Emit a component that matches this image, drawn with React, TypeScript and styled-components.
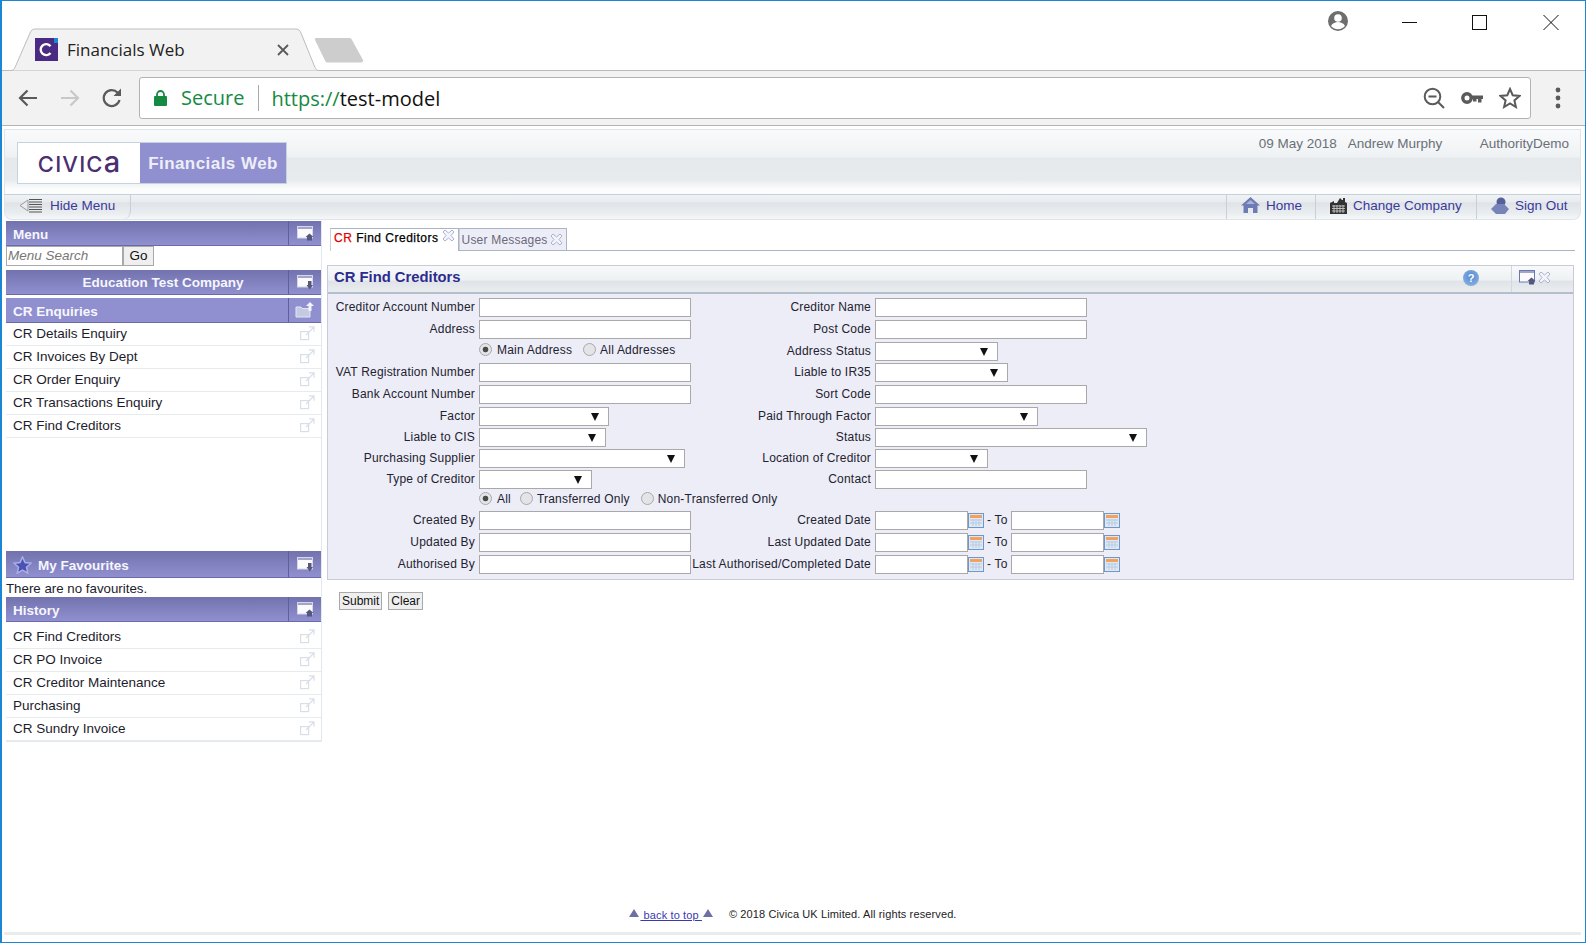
import { ReactElement, ReactNode } from 'react';
import styled, { createGlobalStyle } from 'styled-components';

const GlobalStyle = createGlobalStyle`
    html, body {
        margin: 0;
        padding: 0;
        background: #fff;
    }
    body {
        font-family: "Liberation Sans", Arial, sans-serif;
    }
`;

const Frame = styled.div`
    box-sizing: border-box;
    width: 1586px;
    height: 943px;
    border: 1px solid #1b86d3;
    border-width: 1px 1px 1px 2px;
    display: flex;
    flex-direction: column;
    overflow: hidden;
    background: #fff;
`;

/* ---- browser chrome ---- */

const TabStrip = styled.div`
    height: 69px;
    flex: none;
    display: flex;
    align-items: flex-end;
    border-bottom: 1px solid #b9b9b9;
    position: relative;
`;

const BrowserTab = styled.div`
    position: relative;
    width: 312px;
    height: 43px;
    margin-left: 5px;
    margin-bottom: -1px;
    display: flex;
    align-items: center;
    padding: 0 30px 0 28px;
    box-sizing: border-box;
    gap: 9px;

    > * {
        position: relative;
    }
    > svg.shape {
        position: absolute;
        left: 0;
        top: 0;
    }
`;

const TabTitle = styled.span`
    flex: 1;
    font-family: "Open Sans", sans-serif;
    font-size: 17px;
    color: #222;
    white-space: nowrap;
`;

const NewTab = styled.svg`
    margin-left: -5px;
    margin-bottom: 7px;
`;

const WindowControls = styled.div`
    margin-left: auto;
    align-self: flex-start;
    display: flex;
    align-items: flex-start;
    padding-top: 9px;
    padding-right: 26px;
`;

const Toolbar = styled.div`
    height: 55px;
    flex: none;
    box-sizing: border-box;
    background: #f2f2f2;
    border-bottom: 1px solid #b4b4b4;
    display: flex;
    align-items: center;
    padding: 0 10px 0 15px;
`;

const NavIcons = styled.div`
    display: flex;
    align-items: center;
    gap: 20px;
    width: 122px;
    flex: none;
`;

const UrlBox = styled.div`
    flex: 1;
    height: 42px;
    box-sizing: border-box;
    background: #fff;
    border: 1px solid #b3b3b3;
    border-radius: 3px;
    display: flex;
    align-items: center;
    padding: 0 9px 0 14px;
    font-family: "Open Sans", sans-serif;
    font-size: 20px;
`;

const SecureText = styled.span`
    color: #168a42;
    margin-left: 14px;
    padding-right: 14px;
    border-right: 1px solid #a8a8a8;
    line-height: 26px;
`;

const UrlText = styled.span`
    margin-left: 12px;
    color: #111;
    flex: 1;

    em {
        font-style: normal;
        color: #168a42;
    }
`;

const UrlIcons = styled.div`
    display: flex;
    align-items: center;
    gap: 16px;
`;

const MenuDots = styled.div`
    width: 44px;
    flex: none;
    display: flex;
    justify-content: flex-end;
    padding-right: 14px;
    box-sizing: border-box;
`;

/* ---- application ---- */

const AppShell = styled.div`
    flex: 1;
    display: flex;
    flex-direction: column;
    margin: 3px 4px 0 2px;
    min-height: 0;
`;

const AppHeader = styled.header`
    height: 66px;
    flex: none;
    box-sizing: border-box;
    border: 1px solid #dfe4e9;
    border-bottom: 1px solid #c6d0da;
    background: linear-gradient(#f9fafb 0, #eff2f4 42%, #e6e9ec 44%, #e8ebee 78%, #fbfcfc 92%, #fbfcfc 100%);
    display: flex;
    justify-content: space-between;
    padding: 5px 11px 0 12px;
`;

const LogoBox = styled.div`
    height: 42px;
    width: 270px;
    margin-top: 7px;
    box-sizing: border-box;
    border: 1px solid #c6d2de;
    display: flex;
    background: #fff;
`;

const CivicaLogo = styled.div`
    width: 122px;
    flex: none;
    color: #4b2f70;
    font-family: Inter, sans-serif;
    font-size: 22px;
    font-weight: 500;
    letter-spacing: 1.2px;
    text-align: center;
    line-height: 38px;
    box-sizing: border-box;

    span {
        font-size: 29px;
        letter-spacing: 0;
    }
`;

const ProductName = styled.div`
    flex: 1;
    background: #9090d0;
    color: #eeeef8;
    font-size: 17px;
    font-weight: bold;
    letter-spacing: 0.45px;
    text-align: center;
    line-height: 42px;
`;

const UserInfo = styled.div`
    display: flex;
    font-size: 13.5px;
    color: #6a7078;
    line-height: 18px;
`;

const UserName = styled.span`
    margin-left: 11px;
    width: 132px;
`;

const NavBar = styled.nav`
    height: 25px;
    flex: none;
    box-sizing: border-box;
    border: 1px solid #dfe4e9;
    border-top: 0;
    border-radius: 0 0 8px 8px;
    background: linear-gradient(#f0f3f5 0, #e9ecef 30%, #dfe3e7 32%, #eaedf0 75%, #f5f7f8 100%);
    display: flex;
    justify-content: space-between;
    font-size: 13.5px;
    color: #3a3a9c;
`;

const HideMenu = styled.div`
    width: 126px;
    box-sizing: border-box;
    border-right: 1px solid #c6d0da;
    border-radius: 0 0 8px 8px;
    display: flex;
    align-items: center;
    padding: 0 0 4px 14px;
    gap: 7px;
`;

const NavLinks = styled.div`
    display: flex;
`;

const NavLink = styled.a<{ $width: number }>`
    width: ${p => p.$width}px;
    box-sizing: border-box;
    border-left: 1px solid #c6d0da;
    display: flex;
    align-items: center;
    gap: 6px;
    padding: 0 0 4px 14px;
    color: inherit;
`;

const Columns = styled.div`
    flex: 1;
    display: flex;
    min-height: 0;
`;

const Sidebar = styled.aside`
    width: 316px;
    flex: none;
    padding-top: 1px;
    margin-left: 2px;
    box-sizing: content-box;
    height: 521px;
`;

const SidebarInner = styled.div`
    border-right: 1px solid #e3e8ee;
    border-bottom: 1px solid #e3e8ee;
    height: 521px;
    box-sizing: border-box;
    display: flex;
    flex-direction: column;
`;

const PanelHead = styled.div<{ $flat?: boolean; $height?: number }>`
    height: ${p => p.$height ?? 25}px;
    flex: none;
    box-sizing: border-box;
    display: flex;
    align-items: center;
    color: #f6f6fc;
    font-size: 13.5px;
    font-weight: bold;
    border-bottom: 1px solid #6a6aa8;
    background: ${p => (p.$flat ? '#9090d0' : 'linear-gradient(#7272ae, #9090d0)')};
`;

const HeadText = styled.span<{ $center?: boolean }>`
    flex: 1;
    padding-left: ${p => (p.$center ? 32 : 7)}px;
    padding-top: ${p => (p.$center ? 0 : 2)}px;
    display: flex;
    align-items: center;
    gap: 6px;
    justify-content: ${p => (p.$center ? 'center' : 'flex-start')};
`;

const HeadTool = styled.span`
    width: 33px;
    align-self: stretch;
    flex: none;
    box-sizing: border-box;
    border-left: 1px solid #5f5fa0;
    display: flex;
    align-items: center;
    justify-content: center;
`;

const SearchRow = styled.div`
    height: 20px;
    flex: none;
    display: flex;
    margin-bottom: 4px;
`;

const SearchInput = styled.input`
    width: 117px;
    height: 20px;
    box-sizing: border-box;
    border: 1px solid #a9a9a9;
    padding: 0 1px 2px;
    font-family: inherit;
    font-size: 13.5px;
    font-style: italic;

    &::placeholder {
        color: #777;
        opacity: 1;
    }
`;

const GoButton = styled.button`
    width: 31px;
    height: 20px;
    box-sizing: border-box;
    border: 1px solid #a9a9a9;
    background: #efefef;
    padding: 0 0 2px;
    font-family: inherit;
    font-size: 13.5px;
    color: #111;
`;

const MenuList = styled.ul<{ $top?: number }>`
    list-style: none;
    margin: ${p => p.$top ?? 0}px 0 0;
    padding: 0;
`;

const MenuItem = styled.li`
    height: 23px;
    box-sizing: border-box;
    border-bottom: 1px solid #e6ebf0;
    display: flex;
    align-items: center;
    justify-content: space-between;
    padding: 0 6px 1px 7px;
    font-size: 13.5px;
    color: #1c1c2c;
`;

const Gap = styled.div<{ $height: number }>`
    height: ${p => p.$height}px;
    flex: none;
`;

const NoFavourites = styled.div`
    height: 19px;
    flex: none;
    font-size: 13.3px;
    line-height: 22px;
    color: #1c1c2c;
`;

const Main = styled.main`
    flex: 1;
    min-width: 0;
    padding: 8px 6px 0 5px;
`;

const Tabs = styled.div`
    height: 22px;
    margin-left: 3px;
    border-bottom: 1px solid #a9b5c5;
    display: flex;
    align-items: flex-end;
    box-sizing: content-box;
`;

const PageTab = styled.div<{ $active?: boolean }>`
    box-sizing: border-box;
    height: ${p => (p.$active ? 23 : 22)}px;
    display: flex;
    align-items: ${p => (p.$active ? 'flex-start' : 'center')};
    gap: ${p => (p.$active ? 3 : 2)}px;
    padding: ${p => (p.$active ? '0 3px' : '0 3px 0 2px')};
    font-size: 12px;
    letter-spacing: ${p => (p.$active ? 0.5 : 0.2)}px;
    -webkit-text-stroke: ${p => (p.$active ? '0.25px' : '0')};
    color: ${p => (p.$active ? '#000' : '#6a6a78')};
    background: ${p => (p.$active ? '#fff' : '#ededf7')};
    border: 1px solid #a9b5c5;
    border-bottom: 0;
    border-left-color: #c8d0da;
    margin-bottom: ${p => (p.$active ? '-1px' : '0')};
    line-height: ${p => (p.$active ? 18 : 16)}px;

    b {
        font-weight: normal;
        color: #e00000;
    }
`;

const FormPanel = styled.section`
    margin-top: 14px;
    margin-right: 1px;
    box-sizing: border-box;
    border: 1px solid #c8ccd8;
    background: #ededf7;
    height: 315px;
`;

const FormHead = styled.div`
    height: 28px;
    box-sizing: border-box;
    border-bottom: 2px solid #b4bfcc;
    background: linear-gradient(#f7f9fa 0, #eef1f3 55%, #dfe3e7 57%, #eaedf0 100%);
    display: flex;
    align-items: flex-start;
    color: #2c2c8e;
    font-size: 14.8px;
    font-weight: bold;
    padding-left: 6px;
    line-height: 19px;
`;

const FormTitle = styled.span`
    flex: 1;
    padding-top: 2px;
`;

const HelpBadge = styled.span`
    width: 16px;
    height: 16px;
    margin: 4px 32px 0 0;
    border-radius: 50%;
    background: radial-gradient(circle at 50% 40%, #4f8ad6, #9ab9de);
    color: #fff;
    font-size: 11px;
    line-height: 16px;
    text-align: center;
`;

const FormTools = styled.span`
    width: 62px;
    align-self: stretch;
    flex: none;
    box-sizing: border-box;
    border-left: 1px solid #d2d8df;
    display: flex;
    align-items: center;
    padding: 0 0 3px 7px;
    gap: 2px;
`;

const FormBody = styled.div`
    padding-top: 4px;
`;

const FormRow = styled.div<{ $height?: number }>`
    height: ${p => p.$height ?? 22}px;
    display: grid;
    grid-template-columns: 151px 213px 183px 1fr;
    align-items: start;
`;

const Label = styled.label`
    text-align: right;
    padding-right: 4px;
    font-size: 12px;
    letter-spacing: 0.2px;
    line-height: 19px;
    white-space: nowrap;
    color: #222230;
`;

const TextField = styled.input<{ $width?: number }>`
    display: block;
    width: ${p => p.$width ?? 212}px;
    height: 19px;
    box-sizing: border-box;
    border: 1px solid #a9a9a9;
    background: #fff;
    padding: 0 2px;
    font-family: inherit;
    font-size: 12px;
`;

const SelectWrap = styled.div<{ $width: number }>`
    position: relative;
    width: ${p => p.$width}px;
    height: 19px;

    &::after {
        content: '';
        position: absolute;
        right: 10px;
        top: 6px;
        border-style: solid;
        border-width: 8px 4px 0;
        border-color: #111 transparent transparent;
        pointer-events: none;
    }
`;

const SelectField = styled.select`
    display: block;
    width: 100%;
    height: 19px;
    appearance: none;
    border: 1px solid #a9a9a9;
    border-radius: 0;
    background: #fff;
    font-family: inherit;
    font-size: 12px;
`;

const RadioGroup = styled.div`
    display: flex;
    align-items: center;
    grid-column: 2 / 3;
    height: 15px;
    white-space: nowrap;
`;

const RadioLabel = styled.label<{ $gap: number }>`
    display: flex;
    align-items: center;
    gap: 4px;
    margin-right: ${p => p.$gap}px;
    font-size: 12px;
    letter-spacing: 0.2px;
    color: #222230;

    &:first-child {
        gap: 5px;
    }
`;

const Radio = styled.input`
    appearance: none;
    width: 13px;
    height: 13px;
    margin: 0;
    border-radius: 50%;
    border: 1px solid #a8a8a8;
    background: #e4e4e8;

    &:checked {
        background: radial-gradient(circle, #4a4a4a 0, #4a4a4a 2.5px, #e4e4e8 3.2px);
    }
`;

const DateRange = styled.div`
    display: flex;
    align-items: flex-start;
`;

const DateTo = styled.span`
    width: 27px;
    padding-left: 3px;
    box-sizing: border-box;
    font-size: 12px;
    letter-spacing: 0.2px;
    line-height: 19px;
    color: #222230;
`;

const CalendarIcon = styled.svg`
    display: block;
    margin-top: 2px;
    flex: none;
`;

const ButtonRow = styled.div`
    display: flex;
    gap: 6px;
    margin: 12px 0 0 12px;
`;

const ActionButton = styled.button`
    height: 18px;
    box-sizing: border-box;
    padding: 0 2px;
    border: 1px solid #a9a9a9;
    background: #efefef;
    font-family: inherit;
    font-size: 12px;
    color: #111;
`;

const Footer = styled.footer`
    flex: none;
    height: 24px;
    display: flex;
    justify-content: center;
    align-items: flex-start;
    font-size: 11px;
    letter-spacing: 0.12px;
    color: #222;
`;

const BackToTop = styled.a`
    display: flex;
    align-items: flex-start;
    color: #3a3ab0;
    text-decoration: underline;
    margin-right: 15px;
    white-space: pre;
    line-height: 14px;
`;

const BottomRule = styled.div`
    height: 3px;
    flex: none;
    background: #e8ecef;
    margin-bottom: 7px;
`;

/* ---- drawings ---- */

const WindowIcon = ({ arrow, outline }: { arrow?: 'up' | 'down'; outline?: string }): ReactElement => (
    <svg width="17" height="15" viewBox="0 0 17 15">
        <rect x="0.5" y="0.5" width="15" height="11.500" fill="#fbfbfe" stroke={outline ?? '#d4d6ea'} />
        <rect x="1" y="1" width="14" height="2" fill="#a4a4c8" />
        {arrow === 'down' ? (
            <path d="M11 6h3.500v4H16l-3.200 4.500L9.500 10H11z" fill="#55587a" />
        ) : (
            <path d="M12.500 7.500L16.500 11H15v3.500h-5V11H8.500z" fill="#55587a" />
        )}
    </svg>
);

const FolderUpIcon = (): ReactElement => (
    <svg width="20" height="16" viewBox="0 0 20 16">
        <path d="M1 5h5l1 1.500h8V15H1z" fill="#c4cae2" stroke="#e2e6f2" />
        <path d="M15 0l4 4h-2.500v5h-3V4H11z" fill="#f2f4fa" />
    </svg>
);

const StarIcon = (): ReactElement => (
    <svg width="19" height="18" viewBox="0 0 19 18">
        <path d="M9.500 1l2.500 5.600 6 .6-4.500 4 1.300 6-5.300-3.100-5.300 3.100 1.300-6-4.500-4 6-.6z" fill="#4a52b8" stroke="#a8b0e4" strokeWidth="1.500" />
    </svg>
);

const ExternalIcon = (): ReactElement => (
    <svg width="15" height="15" viewBox="0 0 15 15" fill="none" stroke="#d8dfe8" strokeWidth="1.200">
        <rect x="0.600" y="5.600" width="8" height="8" />
        <path d="M6 9l8-8M9 .8h5v5" />
    </svg>
);

const CloseIcon = (): ReactElement => (
    <svg width="13" height="13" viewBox="0 0 13 13" fill="#f4f5fb" stroke="#aab2d0">
        <path d="M3 1l3.500 3L10 1l2 2-3 3.500L12 10l-2 2-3.500-3L3 12l-2-2 3-3.500L1 3z" />
    </svg>
);

const CalendarGlyph = (): ReactElement => (
    <CalendarIcon width="16" height="15" viewBox="0 0 16 15">
        <rect x="0.500" y="0.500" width="15" height="14" fill="#dfe7f2" stroke="#6f97cb" />
        <rect x="2" y="2" width="12" height="3" fill="#f2a25e" />
        <path d="M2 7h12M2 10h12M5 6v7M8 6v7M11 6v7" stroke="#b8cbe2" strokeWidth="1" />
    </CalendarIcon>
);

const TopTriangle = (): ReactElement => (
    <svg width="12" height="10" viewBox="0 0 12 10">
        <path d="M6 1l5 8H1z" fill="#6f6fa8" />
    </svg>
);

type FieldDef =
    | { kind: 'text' }
    | { kind: 'select'; width: number }
    | { kind: 'dates' };

function Field({ def }: { def: FieldDef }): ReactElement {
    if (def.kind === 'select') {
        return (
            <SelectWrap $width={def.width}>
                <SelectField />
            </SelectWrap>
        );
    }
    if (def.kind === 'dates') {
        return (
            <DateRange>
                <TextField $width={93} />
                <CalendarGlyph />
                <DateTo>- To</DateTo>
                <TextField $width={93} />
                <CalendarGlyph />
            </DateRange>
        );
    }
    return <TextField />;
}

const text: FieldDef = { kind: 'text' };
const dates: FieldDef = { kind: 'dates' };
const select = (width: number): FieldDef => ({ kind: 'select', width });

function Row(props: {
    left: string;
    leftField: FieldDef;
    right: string;
    rightField: FieldDef;
    height?: number;
}): ReactElement {
    return (
        <FormRow $height={props.height}>
            <Label>{props.left}</Label>
            <Field def={props.leftField} />
            <Label>{props.right}</Label>
            <Field def={props.rightField} />
        </FormRow>
    );
}

function RadioRow(props: {
    options: { label: string; gap: number }[];
    right?: ReactNode;
    height: number;
}): ReactElement {
    return (
        <FormRow $height={props.height}>
            <span />
            <RadioGroup>
                {props.options.map((o, i) => (
                    <RadioLabel key={o.label} $gap={o.gap}>
                        <Radio type="radio" readOnly checked={i === 0} />
                        {o.label}
                    </RadioLabel>
                ))}
            </RadioGroup>
            {props.right}
        </FormRow>
    );
}

const enquiries = ['CR Details Enquiry', 'CR Invoices By Dept', 'CR Order Enquiry', 'CR Transactions Enquiry', 'CR Find Creditors'];
const history = ['CR Find Creditors', 'CR PO Invoice', 'CR Creditor Maintenance', 'Purchasing', 'CR Sundry Invoice'];

export default function App(): ReactElement {
    return (
        <Frame>
            <GlobalStyle />
            <TabStrip>
                <BrowserTab>
                    <svg className="shape" width="312" height="43" viewBox="0 0 312 43">
                        <path d="M0 42.500h3c3 0 4-1 5-3L23 5c1-2.500 2.500-4 5-4h261c2.500 0 4 1.500 5 4l14 34.500c1 2 2 3 4 3h1" fill="#f2f2f2" stroke="#bdbdbd" />
                    </svg>
                    <svg width="23" height="23" viewBox="0 0 23 23" style={{ flex: 'none' }}>
                        <rect width="23" height="23" fill="#4a2a82" />
                        <rect x="19" width="4" height="5" fill="#1b86d3" />
                        <path d="M15.500 8.200A5.500 5.500 0 1 0 15.500 15" fill="none" stroke="#fff" strokeWidth="2.400" />
                    </svg>
                    <TabTitle>Financials Web</TabTitle>
                    <svg width="12" height="12" viewBox="0 0 12 12" stroke="#5a5a5a" strokeWidth="1.800">
                        <path d="M1 1l10 10M11 1L1 11" />
                    </svg>
                </BrowserTab>
                <NewTab width="52" height="26" viewBox="0 0 52 26">
                    <path d="M2 1h33c1.500 0 2.500.5 3 2l11 20c.5 1.500-.5 2.500-2 2.500H14c-1.500 0-2.500-.5-3-2L1 3C.5 2 1 1 2 1z" fill="#cdcdcd" />
                </NewTab>
                <WindowControls>
                    <svg width="22" height="22" viewBox="0 0 22 22" style={{ marginRight: 53 }}>
                        <circle cx="11" cy="11" r="10" fill="#6e6e6e" />
                        <circle cx="11" cy="8" r="3.800" fill="#fff" />
                        <path d="M4 16c1.500-3 4.500-4 7-4s5.500 1 7 4c-1.500 2-4 3.200-7 3.200S5.500 18 4 16z" fill="#fff" />
                    </svg>
                    <svg width="16" height="22" viewBox="0 0 16 22" stroke="#111" style={{ marginRight: 54 }}>
                        <path d="M0 12.500h15" />
                    </svg>
                    <svg width="16" height="22" viewBox="0 0 16 22" fill="none" stroke="#111" style={{ marginRight: 55 }}>
                        <rect x="0.500" y="5.500" width="14" height="14" />
                    </svg>
                    <svg width="16" height="22" viewBox="0 0 16 22" fill="none" stroke="#111">
                        <path d="M.5 5l15 15M15.500 5l-15 15" />
                    </svg>
                </WindowControls>
            </TabStrip>
            <Toolbar>
                <NavIcons>
                    <svg width="22" height="22" viewBox="0 0 22 22" fill="none" stroke="#5a5a5a" strokeWidth="2.200">
                        <path d="M20 11H3M10.500 3.500L3 11l7.500 7.500" />
                    </svg>
                    <svg width="22" height="22" viewBox="0 0 22 22" fill="none" stroke="#c8c8c8" strokeWidth="2.200">
                        <path d="M2 11h17M11.500 3.500L19 11l-7.500 7.500" />
                    </svg>
                    <svg width="22" height="22" viewBox="0 0 22 22" fill="none" stroke="#5a5a5a" strokeWidth="2.200">
                        <path d="M18.500 13a8 8 0 1 1-1.800-7.300" />
                        <path d="M20 1.500v7.500h-7.500z" fill="#5a5a5a" stroke="none" />
                    </svg>
                </NavIcons>
                <UrlBox>
                    <svg width="13" height="16" viewBox="0 0 13 16">
                        <path d="M3 7V4.500a3.500 3.500 0 0 1 7 0V7" fill="none" stroke="#168a42" strokeWidth="1.800" />
                        <rect y="6" width="13" height="10" rx="1" fill="#168a42" />
                    </svg>
                    <SecureText>Secure</SecureText>
                    <UrlText>
                        <em>https://</em>test-model
                    </UrlText>
                    <UrlIcons>
                        <svg width="22" height="22" viewBox="0 0 22 22" fill="none" stroke="#5a5a5a" strokeWidth="2">
                            <circle cx="9.500" cy="9.500" r="7.800" />
                            <path d="M15 15l6 6M5.500 9.500h8" />
                        </svg>
                        <svg width="22" height="14" viewBox="0 0 22 14">
                            <circle cx="6" cy="7" r="4.200" fill="none" stroke="#5a5a5a" strokeWidth="3.400" />
                            <path d="M10 4.500h12v3.500h-1.500v3.500H17V8h-1.500v2.500H12V8h-2z" fill="#5a5a5a" />
                        </svg>
                        <svg width="22" height="22" viewBox="0 0 22 22" fill="none" stroke="#5a5a5a" strokeWidth="2">
                            <path d="M11 2l2.700 6.200 6.800.7-5.100 4.500 1.500 6.600-5.900-3.500-5.900 3.500 1.500-6.600L1.500 8.900l6.800-.7z" />
                        </svg>
                    </UrlIcons>
                </UrlBox>
                <MenuDots>
                    <svg width="6" height="22" viewBox="0 0 6 22" fill="#5a5a5a">
                        <circle cx="3" cy="3" r="2.400" />
                        <circle cx="3" cy="11" r="2.400" />
                        <circle cx="3" cy="19" r="2.400" />
                    </svg>
                </MenuDots>
            </Toolbar>
            <AppShell>
                <AppHeader>
                    <LogoBox>
                        <CivicaLogo>
                            CIVIC<span>a</span>
                        </CivicaLogo>
                        <ProductName>Financials Web</ProductName>
                    </LogoBox>
                    <UserInfo>
                        09 May 2018
                        <UserName>Andrew Murphy</UserName>
                        AuthorityDemo
                    </UserInfo>
                </AppHeader>
                <NavBar>
                    <HideMenu>
                        <svg width="24" height="15" viewBox="0 0 24 15">
                            <path d="M9 2L1 7.500 9 13z" fill="#e8ebee" stroke="#9a9a9a" />
                            <path d="M10 1.500h13M10 4h13M10 6.500h13M10 9h13M10 11.500h13M10 14h13" stroke="#555" />
                        </svg>
                        Hide Menu
                    </HideMenu>
                    <NavLinks>
                        <NavLink $width={89}>
                            <svg width="19" height="16" viewBox="0 0 19 16">
                                <path d="M9.500 0L0 8.500h2.500V16H7v-5h5v5h4.500V8.500H19z" fill="#6d7cb4" />
                                <path d="M9.500 3L5 7h9z" fill="#a9b4d8" />
                            </svg>
                            Home
                        </NavLink>
                        <NavLink $width={161}>
                            <svg width="17" height="17" viewBox="0 0 17 17">
                                <path d="M0 6l4-2v2h3l3-5 2 2h1V1h2v4l2 1v11H0z" fill="#333" />
                                <path d="M2 9h13M2 11.500h13M2 14h13M4 8v8M7 8v8M10 8v8M13 8v8" stroke="#d8d8d8" strokeWidth="0.800" />
                            </svg>
                            Change Company
                        </NavLink>
                        <NavLink $width={104}>
                            <svg width="18" height="17" viewBox="0 0 18 17">
                                <circle cx="10" cy="5" r="4.500" fill="#55609a" />
                                <path d="M0 12l5-5h8l5 5-4 5H5z" fill="#7884b8" />
                            </svg>
                            Sign Out
                        </NavLink>
                    </NavLinks>
                </NavBar>
                <Columns>
                    <Sidebar>
                        <SidebarInner>
                            <PanelHead>
                                <HeadText>Menu</HeadText>
                                <HeadTool>
                                    <WindowIcon />
                                </HeadTool>
                            </PanelHead>
                            <SearchRow>
                                <SearchInput placeholder="Menu Search" />
                                <GoButton>Go</GoButton>
                            </SearchRow>
                            <PanelHead>
                                <HeadText $center>Education Test Company</HeadText>
                                <HeadTool>
                                    <WindowIcon arrow="down" />
                                </HeadTool>
                            </PanelHead>
                            <Gap $height={3} />
                            <PanelHead $flat>
                                <HeadText>CR Enquiries</HeadText>
                                <HeadTool>
                                    <FolderUpIcon />
                                </HeadTool>
                            </PanelHead>
                            <MenuList>
                                {enquiries.map(item => (
                                    <MenuItem key={item}>
                                        {item}
                                        <ExternalIcon />
                                    </MenuItem>
                                ))}
                            </MenuList>
                            <Gap $height={113} />
                            <PanelHead $height={27}>
                                <HeadText>
                                    <StarIcon />
                                    My Favourites
                                </HeadText>
                                <HeadTool>
                                    <WindowIcon arrow="down" />
                                </HeadTool>
                            </PanelHead>
                            <NoFavourites>There are no favourites.</NoFavourites>
                            <PanelHead>
                                <HeadText>History</HeadText>
                                <HeadTool>
                                    <WindowIcon />
                                </HeadTool>
                            </PanelHead>
                            <MenuList $top={4}>
                                {history.map(item => (
                                    <MenuItem key={item}>
                                        {item}
                                        <ExternalIcon />
                                    </MenuItem>
                                ))}
                            </MenuList>
                        </SidebarInner>
                    </Sidebar>
                    <Main>
                        <Tabs>
                            <PageTab $active>
                                <span>
                                    <b>CR</b> Find Creditors
                                </span>
                                <CloseIcon />
                            </PageTab>
                            <PageTab>
                                User Messages
                                <CloseIcon />
                            </PageTab>
                        </Tabs>
                        <FormPanel>
                            <FormHead>
                                <FormTitle>CR Find Creditors</FormTitle>
                                <HelpBadge>?</HelpBadge>
                                <FormTools>
                                    <WindowIcon outline="#6a78b0" />
                                    <CloseIcon />
                                </FormTools>
                            </FormHead>
                            <FormBody>
                                <Row left="Creditor Account Number" leftField={text} right="Creditor Name" rightField={text} />
                                <Row left="Address" leftField={text} right="Post Code" rightField={text} />
                                <RadioRow
                                    height={21}
                                    options={[
                                        { label: 'Main Address', gap: 11 },
                                        { label: 'All Addresses', gap: 0 },
                                    ]}
                                    right={
                                        <>
                                            <Label>Address Status</Label>
                                            <Field def={select(123)} />
                                        </>
                                    }
                                />
                                <Row left="VAT Registration Number" leftField={text} right="Liable to IR35" rightField={select(133)} />
                                <Row left="Bank Account Number" leftField={text} right="Sort Code" rightField={text} />
                                <Row left="Factor" leftField={select(130)} right="Paid Through Factor" rightField={select(163)} height={21} />
                                <Row left="Liable to CIS" leftField={select(127)} right="Status" rightField={select(272)} height={21} />
                                <Row left="Purchasing Supplier" leftField={select(206)} right="Location of Creditor" rightField={select(113)} height={21} />
                                <Row left="Type of Creditor" leftField={select(113)} right="Contact" rightField={text} height={21} />
                                <RadioRow
                                    height={20}
                                    options={[
                                        { label: 'All', gap: 9 },
                                        { label: 'Transferred Only', gap: 11 },
                                        { label: 'Non-Transferred Only', gap: 0 },
                                    ]}
                                />
                                <Row left="Created By" leftField={text} right="Created Date" rightField={dates} />
                                <Row left="Updated By" leftField={text} right="Last Updated Date" rightField={dates} />
                                <Row left="Authorised By" leftField={text} right="Last Authorised/Completed Date" rightField={dates} />
                            </FormBody>
                        </FormPanel>
                        <ButtonRow>
                            <ActionButton>Submit</ActionButton>
                            <ActionButton>Clear</ActionButton>
                        </ButtonRow>
                    </Main>
                </Columns>
                <Footer>
                    <BackToTop>
                        <TopTriangle /> back to top <TopTriangle />
                    </BackToTop>
                    © 2018 Civica UK Limited. All rights reserved.
                </Footer>
                <BottomRule />
            </AppShell>
        </Frame>
    );
}
